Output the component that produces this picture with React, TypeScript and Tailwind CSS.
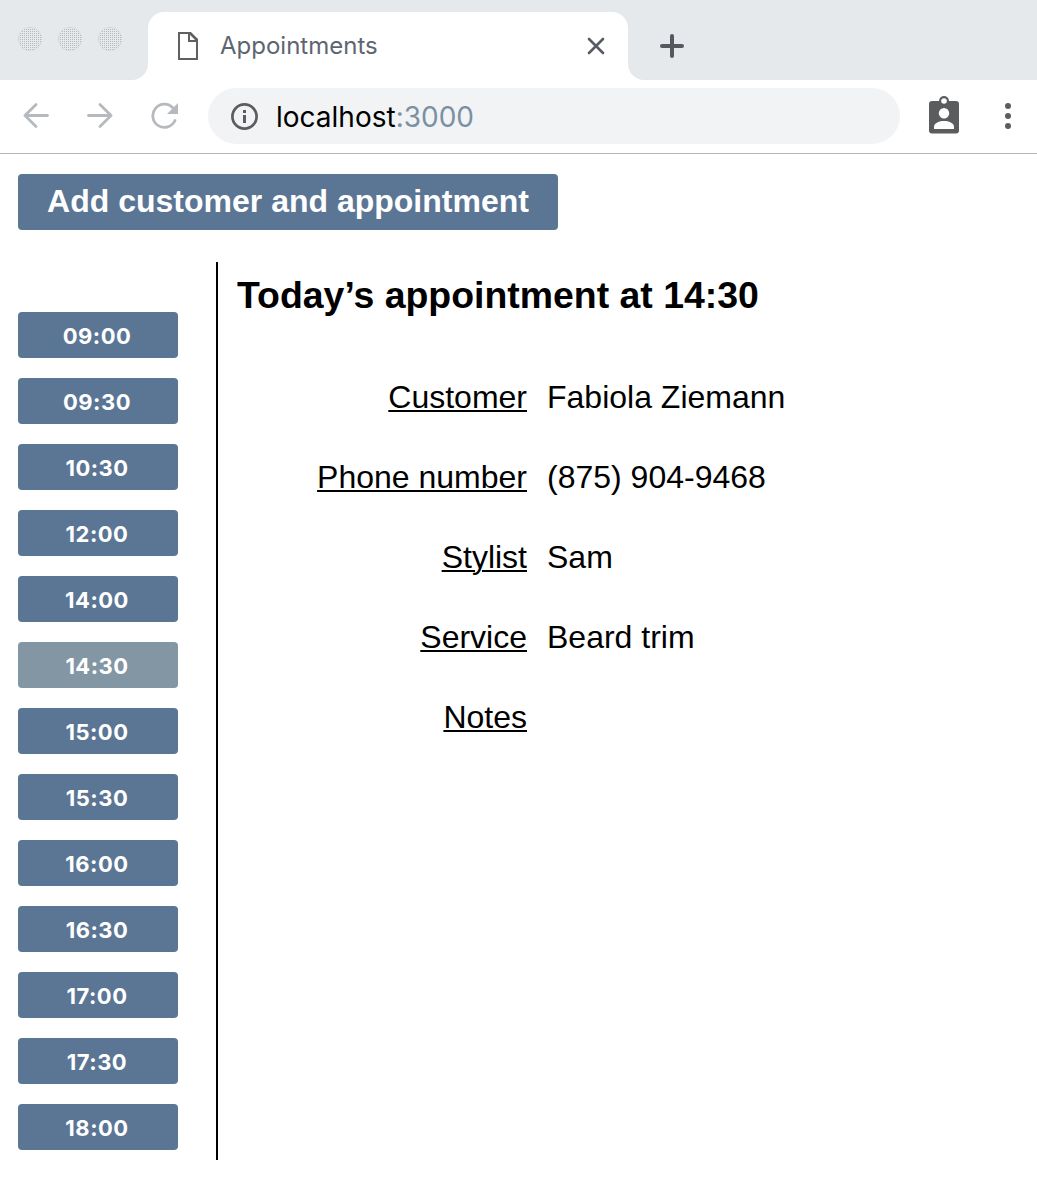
const times = [
  '09:00', '09:30', '10:30', '12:00', '14:00', '14:30', '15:00',
  '15:30', '16:00', '16:30', '17:00', '17:30', '18:00',
];

const details = [
  { label: 'Customer', value: 'Fabiola Ziemann' },
  { label: 'Phone number', value: '(875) 904-9468' },
  { label: 'Stylist', value: 'Sam' },
  { label: 'Service', value: 'Beard trim' },
  { label: 'Notes', value: '' },
];

function TrafficLights() {
  return (
    <svg width="104" height="24" viewBox="0 0 104 24" className="block">
      <defs>
        <pattern id="stipple" width="2" height="2" patternUnits="userSpaceOnUse">
          <rect width="1" height="1" fill="#b6babd" shapeRendering="crispEdges" />
        </pattern>
      </defs>
      {[12, 52, 92].map((x) => (
        <g key={x}>
          <circle cx={x} cy="12" r="11.5" fill="url(#stipple)" />
          <circle cx={x} cy="12" r="11.5" fill="none" stroke="#b6babd" strokeDasharray="1 1.4" strokeWidth="0.6" />
        </g>
      ))}
    </svg>
  );
}

function TabStrip() {
  return (
    <div className="flex h-20 bg-white">
      <div className="w-[148px] rounded-br-2xl bg-[#e5e9ec] pt-[27px] pl-[18px]">
        <TrafficLights />
      </div>
      <div className="w-[480px] bg-[#e5e9ec] pt-3">
        <div className="flex h-[68px] items-center rounded-t-2xl bg-white pl-[30px]">
          <svg width="20" height="28" viewBox="0 0 20 28" fill="none" stroke="#5f6062" strokeWidth="2">
            <path d="M1 1H12.5L19 7.5V27H1Z" />
            <path d="M11 1V9H19" />
            <path d="M12 1.5L18.5 8" />
          </svg>
          <span className="ml-[22px] w-[158px] font-[Inter] text-[24px] leading-8 tracking-[0px] whitespace-nowrap text-[#5d6670]">
            Appointments
          </span>
          <svg width="18" height="18" viewBox="0 0 18 18" fill="none" stroke="#565c62" strokeWidth="2.6" strokeLinecap="round" className="ml-[209px]">
            <path d="M2 2L16 16M16 2L2 16" />
          </svg>
        </div>
      </div>
      <div className="flex flex-1 rounded-bl-2xl bg-[#e5e9ec] pt-[34px] pl-8">
        <svg width="24" height="24" viewBox="0 0 24 24" fill="none" stroke="#55585c" strokeWidth="4" strokeLinecap="round">
          <path d="M12 2V22M2 12H22" />
        </svg>
      </div>
    </div>
  );
}

function Toolbar() {
  return (
    <div className="flex h-[74px] items-start border-b border-[#b3b5b7] pt-2">
      <svg width="26" height="26" viewBox="0 0 26 26" fill="none" stroke="#b6babf" strokeWidth="2.8" strokeLinecap="round" strokeLinejoin="round" className="mt-[15px] ml-[23px]">
        <path d="M24.5 12.5H2M13 1.5L2 12.5L13 23.5" />
      </svg>
      <svg width="26" height="26" viewBox="0 0 26 26" fill="none" stroke="#b6babf" strokeWidth="2.8" strokeLinecap="round" strokeLinejoin="round" className="mt-[15px] ml-[38px]">
        <path d="M1.5 12.5H24M13 1.5L24 12.5L13 23.5" />
      </svg>
      <svg width="28" height="28" viewBox="0 0 28 28" className="mt-[14px] ml-[38px]">
        <path d="M24 18.5A11.6 11.6 0 1 1 22 6" fill="none" stroke="#b6babf" strokeWidth="2.8" strokeLinecap="round" />
        <path d="M27 1V12H16Z" fill="#b6babf" />
      </svg>
      <div className="ml-[29px] flex h-14 w-[692px] items-center rounded-full bg-[#f1f3f5] pl-[23px]">
        <svg width="27" height="27" viewBox="0 0 27 27" fill="#5b5e61">
          <circle cx="13.5" cy="13.5" r="12.1" fill="none" stroke="#5b5e61" strokeWidth="2.7" />
          <rect x="12" y="7" width="3" height="3" />
          <rect x="12" y="12" width="3" height="8" />
        </svg>
        <span className="ml-[18px] pt-px font-[Inter] text-[28px] leading-9 tracking-[0px] whitespace-nowrap text-black">
          localhost<span className="text-[#7b90a3]">:3000</span>
        </span>
      </div>
      <svg width="30" height="38" viewBox="0 0 30 38" className="mt-2 ml-[29px]">
        <rect y="5" width="30" height="32.5" rx="3" fill="#5b5c5e" />
        <circle cx="15" cy="5" r="5" fill="#5b5c5e" />
        <circle cx="15" cy="5" r="2.8" fill="white" />
        <circle cx="15" cy="17.3" r="5.2" fill="white" />
        <path d="M5 33V30.5C5 27 10.5 25 15 25S25 27 25 30.5V33Z" fill="white" />
      </svg>
      <svg width="6" height="28" viewBox="0 0 6 28" fill="#5b5e61" className="mt-[14px] ml-[46px]">
        <circle cx="3" cy="4" r="3" />
        <circle cx="3" cy="14" r="3" />
        <circle cx="3" cy="24" r="3" />
      </svg>
    </div>
  );
}

export default function App() {
  return (
    <div className="h-[1190px] w-[1037px] overflow-hidden bg-white font-['Liberation_Sans',sans-serif] text-black">
      <TabStrip />
      <Toolbar />
      <main className="px-[18px] pt-5">
        <button className="flex h-14 w-[540px] items-center justify-center rounded bg-[#5b7694] pb-[2px] text-[32px] leading-9 font-bold whitespace-nowrap text-white">
          Add customer and appointment
        </button>
        <div className="mt-8 flex h-[898px]">
          <ul className="flex w-[198px] flex-col gap-5 pt-[50px]">
            {times.map((time) => (
              <li key={time} className="h-[46px]">
                <button
                  className={`h-[46px] w-40 rounded pt-[2px] pr-[2px] font-[Inter] text-[22px] leading-[44px] font-bold tracking-[0.5px] text-white ${
                    time === '14:30' ? 'bg-[#8396a3]' : 'bg-[#5b7694]'
                  }`}
                >
                  {time}
                </button>
              </li>
            ))}
          </ul>
          <section className="flex-1 border-l-2 border-black pt-3 pl-[19px]">
            <h1 className="text-[37.44px] leading-[43px] font-bold whitespace-nowrap">Today’s appointment at 14:30</h1>
            <dl className="mt-[60px] text-[32px] leading-[40px]">
              {details.map((item) => (
                <div key={item.label} className="flex h-20 gap-5">
                  <dt className="w-[290px] text-right">
                    <span className="whitespace-nowrap underline decoration-2 underline-offset-[2px]">{item.label}</span>
                  </dt>
                  <dd className="whitespace-nowrap">{item.value}</dd>
                </div>
              ))}
            </dl>
          </section>
        </div>
      </main>
    </div>
  );
}
